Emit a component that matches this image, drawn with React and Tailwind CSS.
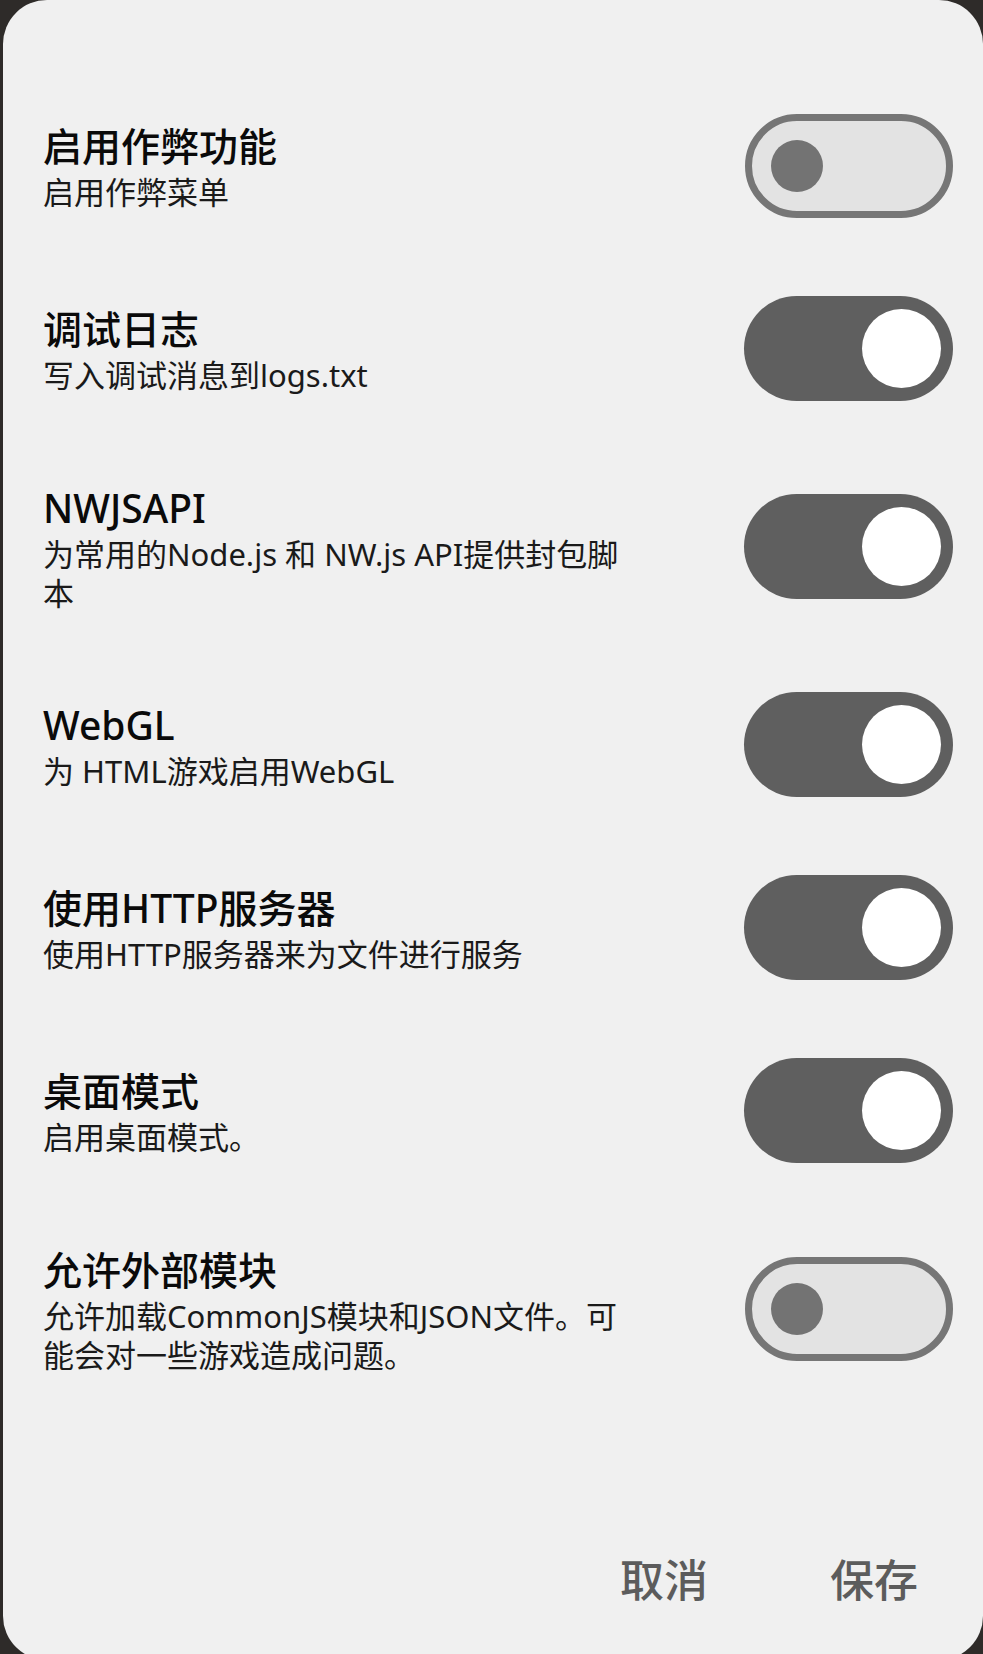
import React from "react";

const settings = [
    { title: "启用作弊功能", desc: "启用作弊菜单", on: false, h: "h-[183px]" },
    { title: "调试日志", desc: "写入调试消息到logs.txt", on: true, h: "h-[183px]" },
    { title: "NWJSAPI", desc: "为常用的Node.js 和 NW.js API提供封包脚\n本", on: true, h: "h-[213px]" },
    { title: "WebGL", desc: "为 HTML游戏启用WebGL", on: true, h: "h-[183px]" },
    { title: "使用HTTP服务器", desc: "使用HTTP服务器来为文件进行服务", on: true, h: "h-[183px]" },
    { title: "桌面模式", desc: "启用桌面模式。", on: true, h: "h-[183px]" },
    { title: "允许外部模块", desc: "允许加载CommonJS模块和JSON文件。可\n能会对一些游戏造成问题。", on: false, h: "h-[213px]" },
];

const Toggle = ({ on }) =>
    on ? (
        <div className="w-[209px] h-[105px] shrink-0 rounded-full bg-[#5f5f5f] flex items-center justify-end pr-[12px]">
            <div className="w-[79px] h-[79px] rounded-full bg-white" />
        </div>
    ) : (
        <div className="w-[208px] h-[104px] shrink-0 rounded-full bg-[#e3e3e3] border-[7px] border-[#767676] flex items-center pl-[19px]">
            <div className="w-[52px] h-[52px] rounded-full bg-[#737373]" />
        </div>
    );

export default function App() {
    return (
        <div
            className="w-[983px] h-[1654px] overflow-hidden bg-[#2e2b29]"
            style={{ fontFamily: '"Noto Sans", "Noto Sans CJK SC", sans-serif' }}
        >
            <div className="ml-[3px] h-[1660px] rounded-[44px] bg-[#f0f0f0] pt-[74px] pl-[40px] pr-[30px]">
                {settings.map((s) => (
                    <div key={s.title} className={`flex items-center justify-between ${s.h}`}>
                        <div className="w-[620px]">
                            <div className="text-[39px] leading-[54px] font-medium text-[#0a0a0a]">{s.title}</div>
                            <div className="text-[31px] leading-[39px] text-[#1a1a1a] whitespace-pre-line">{s.desc}</div>
                        </div>
                        <Toggle on={s.on} />
                    </div>
                ))}
                <div className="flex justify-end items-center mt-[135px] pr-[35px] gap-[122px]">
                    <button className="text-[44px] leading-[60px] font-medium text-[#5c5c5c]">取消</button>
                    <button className="text-[44px] leading-[60px] font-medium text-[#5c5c5c]">保存</button>
                </div>
            </div>
        </div>
    );
}
